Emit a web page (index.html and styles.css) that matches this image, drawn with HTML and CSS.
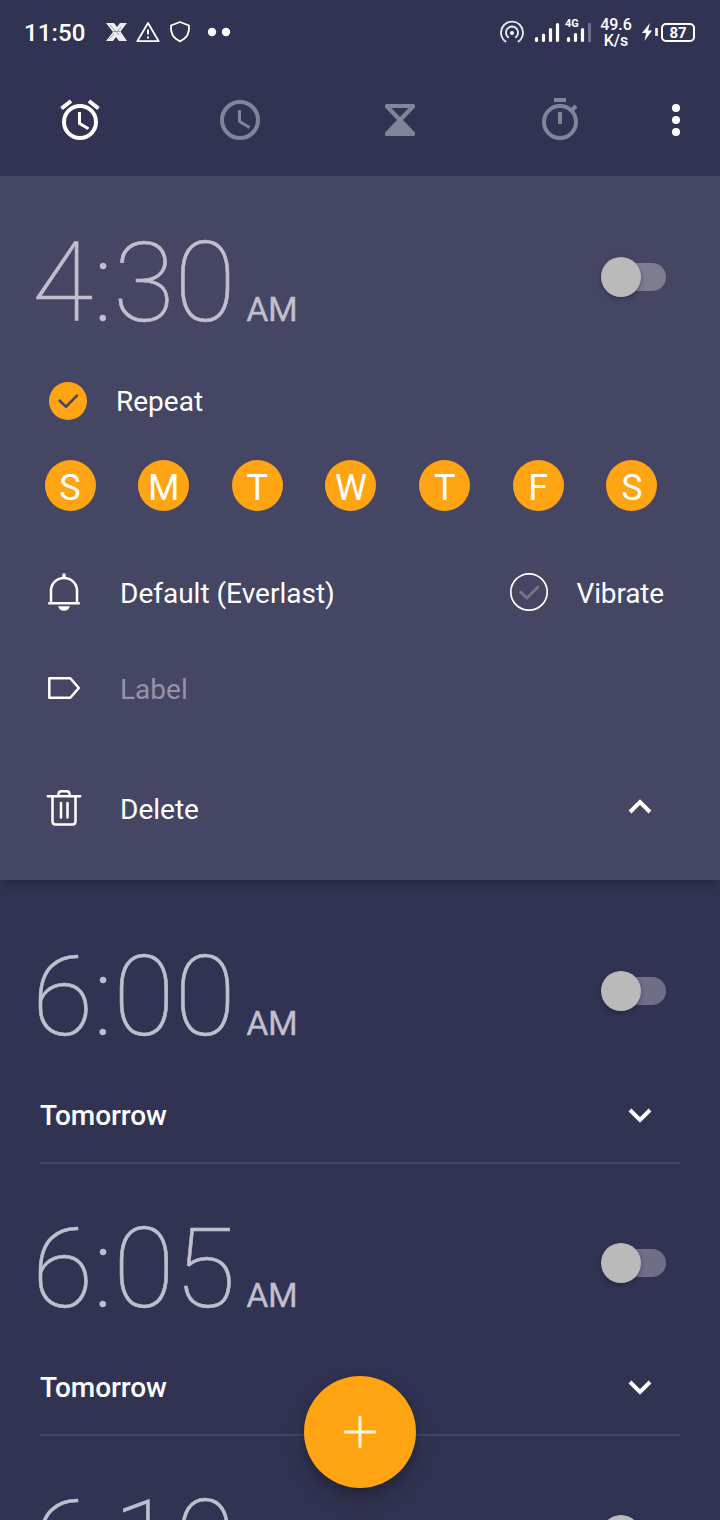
FILE: index.html
```
<!DOCTYPE html>
<html lang="en">
<head>
<meta charset="utf-8">
<title>Clock</title>
<link rel="stylesheet" href="styles.css">
</head>
<body>
<div class="screen">
  <header class="status">
    <span class="clock">11:50</span>
    <svg class="status-left" width="130" height="24" viewBox="0 0 130 24">
      <path d="M1 3h8l3 4 3-4h7l-6.500 8.500L22 21h-8l-3-4-3 4H1l7-9z" fill="#ececf3"/>
      <path d="M5 5l9 10M16 7l-4 5M4 19l5-5M8 11.500h7" stroke="#8a8ba8" stroke-width=".8" fill="none"/>
      <path d="M43 3L53.700 21.200H32.300z" fill="none" stroke="#fff" stroke-width="1.800" stroke-linejoin="round"/>
      <path d="M43 9.500v5M43 16.500v2" stroke="#fff" stroke-width="1.900"/>
      <path d="M75 2L84 5.500C84.800 13.500 81.500 18.500 75 21.400 68.500 18.500 65.200 13.500 66 5.500z" fill="none" stroke="#fff" stroke-width="1.800" stroke-linejoin="round"/>
      <circle cx="107" cy="12" r="4.200" fill="#fff"/><circle cx="121" cy="12" r="4.200" fill="#fff"/>
    </svg>
    <svg class="status-right" width="93" height="32" viewBox="0 0 93 32">
      <g fill="none" stroke="#e6e6ee" stroke-width="1.900" stroke-linecap="round">
        <path d="M5.500 25.500A11 11 0 1 1 18.500 25.500"/>
        <path d="M8.200 21.200A6 6 0 1 1 15.800 21.200"/>
      </g>
      <circle cx="12" cy="17" r="2" fill="#fff"/>
      <path d="M36.500 22.500v2M43.500 19v5.500M50.500 13.500v11M57.500 8.500v16M68.500 22.500v2M75.500 18.500v6M82.500 13.500v11" stroke="#fff" stroke-width="3.200" stroke-linecap="round"/>
      <path d="M89.500 7v19" stroke="#6f7090" stroke-width="3"/>
      <text x="65" y="11" class="net">4G</text>
    </svg>
    <div class="speed">49.6<br>K/s</div>
    <svg class="bolt" width="18" height="20" viewBox="0 0 18 20"><path d="M8 1L0 11h4.200L2.500 19 10 8.500H6z" fill="#fff"/><path d="M14.500 6v8" stroke="#fff" stroke-width="2.600"/></svg>
    <span class="battery">87</span>
  </header>

  <nav class="tabs">
    <svg class="tab active" viewBox="0 0 48 48">
      <circle cx="24" cy="26" r="16" fill="none" stroke="currentColor" stroke-width="4"/>
      <path d="M23.500 16v11.500l9 5.300" fill="none" stroke="currentColor" stroke-width="3"/>
      <path d="M5.500 12.500L15 5M33 5l9.500 7.500" stroke="currentColor" stroke-width="4"/>
    </svg>
    <svg class="tab" viewBox="0 0 48 48">
      <circle cx="24" cy="24" r="18" fill="none" stroke="currentColor" stroke-width="4"/>
      <path d="M23.500 14v11.500l10 6" fill="none" stroke="currentColor" stroke-width="3"/>
    </svg>
    <svg class="tab" viewBox="0 0 48 48">
      <path fill-rule="evenodd" fill="currentColor" d="M10.500 8h27q1.500 0 1.500 1.500v2L27 24l12 12.500v2q0 1.500-1.500 1.500h-27q-1.500 0-1.500-1.500v-2L21 24 9 11.500v-2q0-1.500 1.500-1.500zM15.500 12L24 21l8.500-9z"/>
    </svg>
    <svg class="tab" viewBox="0 0 48 48">
      <circle cx="24" cy="26" r="16" fill="none" stroke="currentColor" stroke-width="4"/>
      <path d="M18 4h12M24 16v12M34.500 15.500L40 10" stroke="currentColor" stroke-width="4"/>
    </svg>
    <svg class="more" viewBox="0 0 8 32"><circle cx="4" cy="4" r="4"/><circle cx="4" cy="16" r="4"/><circle cx="4" cy="28" r="4"/></svg>
  </nav>

  <section class="card">
    <div class="time-row"><span class="time">4:30</span><span class="ampm">AM</span><span class="toggle"></span></div>
    <div class="row repeat">
      <svg class="check" viewBox="0 0 40 40"><circle cx="20" cy="20" r="19" fill="#ffa412"/><path d="M11.500 19.500l6.500 6.200 11-11" fill="none" stroke="#45465f" stroke-width="2.500" stroke-linecap="round"/></svg>
      <span>Repeat</span>
    </div>
    <div class="days"><span>S</span><span>M</span><span>T</span><span>W</span><span>T</span><span>F</span><span>S</span></div>
    <div class="row ringtone">
      <svg class="icon" viewBox="0 0 40 40"><path d="M7 31.500V18.500a13 12.500 0 0 1 26 0v13M4.200 31.200h31.600" fill="none" stroke="#fff" stroke-width="2.500"/><path d="M18 6q0-4.800 2-4.800T22 6z" fill="#fff"/><path d="M14 34.200h12c-1 3-3.200 4.500-6 4.500s-5-1.500-6-4.500z" fill="#fff"/></svg>
      <span>Default (Everlast)</span>
      <svg class="check vib-check" viewBox="0 0 40 40"><circle cx="20" cy="20" r="18.200" fill="none" stroke="#fff" stroke-width="1.700"/><path d="M11.500 20l6.500 6 11-11" fill="none" stroke="#77788f" stroke-width="2.500" stroke-linecap="round"/></svg>
      <span>Vibrate</span>
    </div>
    <div class="row label">
      <svg class="icon" viewBox="0 0 40 40"><path d="M5.300 10.300h21L34.800 20l-8.500 9.700h-21z" fill="none" stroke="#fff" stroke-width="2.500" stroke-linejoin="round"/></svg>
      <span class="hint">Label</span>
    </div>
    <div class="row delete">
      <svg class="icon" viewBox="0 0 40 40"><path d="M3.800 8.300h32.400M14.500 8V6q0-2.800 2.800-2.800h5.400q2.800 0 2.800 2.800v2M8.500 8.300v25.200q0 3 3 3h17q3 0 3-3V8.300M17 15v14.500M23.500 15v14.500" fill="none" stroke="#fff" stroke-width="2.500" stroke-linecap="round"/></svg>
      <span>Delete</span>
      <svg class="chevron" viewBox="0 0 24 16"><path d="M2 13l10-10 10 10"/></svg>
    </div>
  </section>

  <main class="list">
    <article class="alarm">
      <div class="time-row"><span class="time">6:00</span><span class="ampm">AM</span><span class="toggle"></span></div>
      <div class="row next"><span>Tomorrow</span><svg class="chevron" viewBox="0 0 24 16"><path d="M2 3l10 10 10-10"/></svg></div>
    </article>
    <article class="alarm">
      <div class="time-row"><span class="time">6:05</span><span class="ampm">AM</span><span class="toggle"></span></div>
      <div class="row next"><span>Tomorrow</span><svg class="chevron" viewBox="0 0 24 16"><path d="M2 3l10 10 10-10"/></svg></div>
    </article>
    <article class="alarm">
      <div class="time-row"><span class="time">6:10</span><span class="toggle"></span></div>
    </article>
  </main>

  <div class="fab"><svg width="32" height="32" viewBox="0 0 32 32"><path d="M16 0v32M0 16h32" stroke="#fff5dc" stroke-width="3"/></svg></div>
</div>
</body>
</html>
```
FILE: styles.css
```
* { box-sizing: border-box; }
body { margin: 0; background: #313353; }
svg { display: block; flex: none; }
.screen {
  position: relative;
  width: 720px;
  height: 1520px;
  overflow: hidden;
  background: #313353;
  color: #fff;
  font-family: Roboto, sans-serif;
}

.status { display: flex; align-items: center; height: 64px; padding: 0 25px 0 24px; }
.clock { width: 81px; font-size: 24px; font-weight: 500; line-height: 32px; padding-top: 1px; letter-spacing: .1px; }
.status-right { margin: 0 0 0 auto; }
.net { font: 700 11px Roboto, sans-serif; fill: #fff; }
.speed { width: 46px; text-align: center; font-size: 16px; font-weight: 500; line-height: 16px; padding-top: 2px; }
.bolt { margin: 0 1px 0 3px; }
.battery {
  width: 34px; height: 19px;
  border: 2px solid #fff; border-radius: 5px;
  font-size: 15px; font-weight: 700; line-height: 16px; text-align: center;
}

.tabs { display: flex; align-items: center; height: 112px; }
.tab { width: 48px; height: 48px; margin: 0 56px; color: #838499; }
.tab.active { color: #fff; }
.more { width: 8px; height: 32px; margin-left: 32px; fill: #fff; }

.card {
  position: relative;
  height: 704px;
  padding-top: 47px;
  background: #454663;
  box-shadow: 0 8px 8px -4px rgba(20, 20, 35, .5);
}
.time-row { display: flex; align-items: baseline; height: 120px; padding: 0 54px 0 32px; color: #c0bfce; }
.time { font-size: 112px; font-weight: 100; line-height: 120px; -webkit-text-stroke: .6px currentColor; }
.ampm { margin-left: 10.500px; font-size: 34px; line-height: 40px; letter-spacing: -.6px; -webkit-text-stroke: .3px currentColor; }
.toggle {
  align-self: flex-start;
  display: flex; align-items: center;
  width: 60px; height: 28px;
  margin: 40px 0 0 auto;
  border-radius: 14px;
  background: #7d7d92;
}
.toggle::before {
  content: "";
  flex: none;
  width: 40px; height: 40px;
  margin-left: -5px;
  border-radius: 50%;
  background: #bababa;
  box-shadow: 0 2px 4px rgba(20, 20, 40, .4);
}
.list .toggle { background: #6e6e87; }

.row { display: flex; align-items: center; height: 32px; padding: 0 56px 0 44px; font-size: 28px; line-height: 32px; }
.row span { white-space: nowrap; padding-top: 2px; }
.check { width: 40px; height: 40px; }
.icon { width: 40px; height: 40px; margin-right: 36px; }
.repeat { margin-top: 42px; padding-left: 48px; }
.repeat .check { margin: -1px 28px 0 0; }
.days { display: flex; justify-content: space-between; margin-top: 43px; padding: 0 62.500px 0 44.500px; }
.days span { width: 51px; height: 51px; border-radius: 50%; background: #ffa412; text-align: center; font-size: 36px; line-height: 56px; }
.ringtone { margin-top: 66px; }
.ringtone .icon, .vib-check { margin-top: -2px; }
.vib-check { margin-left: auto; margin-right: 28px; }
.ringtone .vib-check + span { letter-spacing: -.15px; }
.label { margin-top: 64px; }
.label .icon { margin-top: -2px; }
.hint { color: #9493a9; }
.delete { margin-top: 88px; }
.delete .icon { margin-top: -2px; }
.chevron { width: 24px; height: 16px; margin-left: auto; fill: none; stroke: #fff; stroke-width: 4; }
.delete .chevron { margin-top: -5px; }
.delete, .next { padding-right: 68px; }

.list { padding-top: 12px; }
.alarm { height: 272px; padding-top: 45px; position: relative; }
.next { margin-top: 42px; padding-left: 40px; font-weight: 500; letter-spacing: -.1px; }
.alarm::after { content: ""; display: block; height: 2px; margin: 31px 40px 0; background: #454665; }

.fab {
  position: absolute; left: 304px; top: 1376px;
  display: flex; align-items: center; justify-content: center;
  width: 112px; height: 112px;
  border-radius: 50%;
  background: #ffa412;
  box-shadow: 0 10px 18px rgba(25, 25, 35, .45), 0 1px 5px rgba(25, 25, 35, .25);
}
```
